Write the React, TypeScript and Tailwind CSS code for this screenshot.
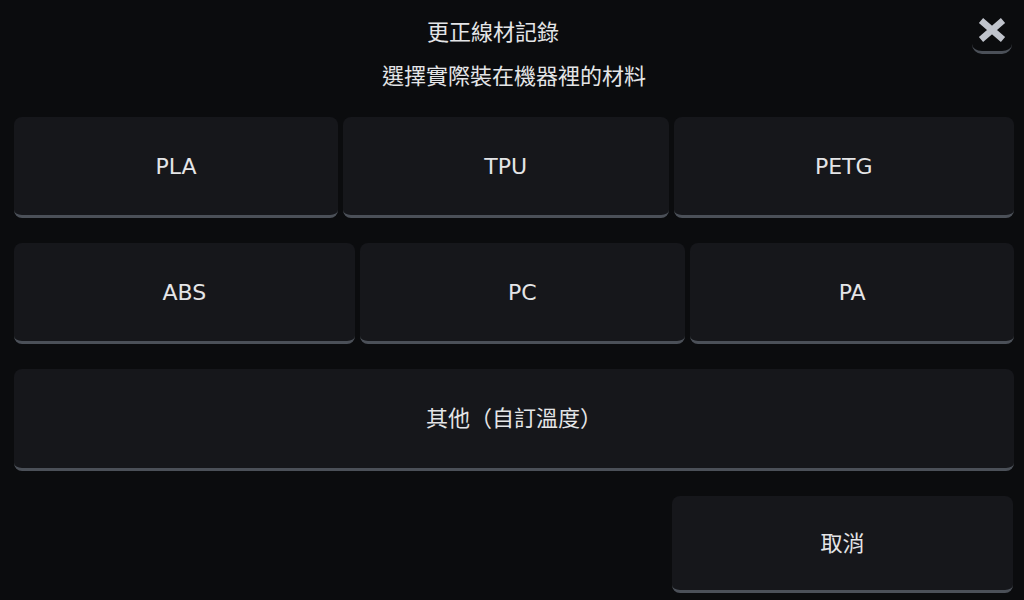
const ROWS = [
  ['PLA', 'TPU', 'PETG'],
  ['ABS', 'PC', 'PA'],
];

const FONT = "font-['DejaVu_Sans','Noto_Sans_CJK_TC',sans-serif]";

function ChoiceButton({ label, className = '' }: { label: string; className?: string }) {
  return (
    <button
      type="button"
      className={`flex items-center justify-center rounded-[8px] border-b-[3px] border-[#4b5058] bg-[#16171b] text-[22px] text-[#e4e5e7] ${className}`}
    >
      {label}
    </button>
  );
}

export default function App() {
  return (
    <div
      className={`flex h-[600px] w-[1024px] flex-col overflow-hidden bg-[#0b0c0e] pl-[14px] pr-[10px] pt-[13px] ${FONT}`}
    >
      <div className="flex h-[40px] items-center">
        <div className="flex-1 text-center text-[22px] leading-[30px] text-[#e4e5e7]">更正線材記錄</div>
        <button
          type="button"
          className="mr-[2px] flex h-[41px] w-[40px] items-start justify-center rounded-[10px] border-b-[3px] border-[#4b5058] pt-[5px]"
        >
          <svg width="28" height="24" viewBox="0 0 28 24">
            <path d="M3 2.5 L25 21.5 M25 2.5 L3 21.5" stroke="#c0c4cc" strokeWidth="6.5" fill="none" />
          </svg>
        </button>
      </div>

      <div className="mt-[9px] h-[30px] text-center text-[22px] leading-[30px] text-[#e4e5e7]">
        選擇實際裝在機器裡的材料
      </div>

      <div className="mt-[25px] flex flex-col gap-[25px]">
        {ROWS.map((row) => (
          <div key={row[0]} className="flex h-[101px] gap-[5px]">
            {row.map((label) => (
              <ChoiceButton key={label} label={label} className="grow" />
            ))}
          </div>
        ))}
        <div className="flex h-[102px]">
          <ChoiceButton label="其他（自訂溫度）" className="grow" />
        </div>
        <div className="flex h-[97px] justify-end pr-[1px]">
          <ChoiceButton label="取消" className="w-[341px]" />
        </div>
      </div>
    </div>
  );
}
